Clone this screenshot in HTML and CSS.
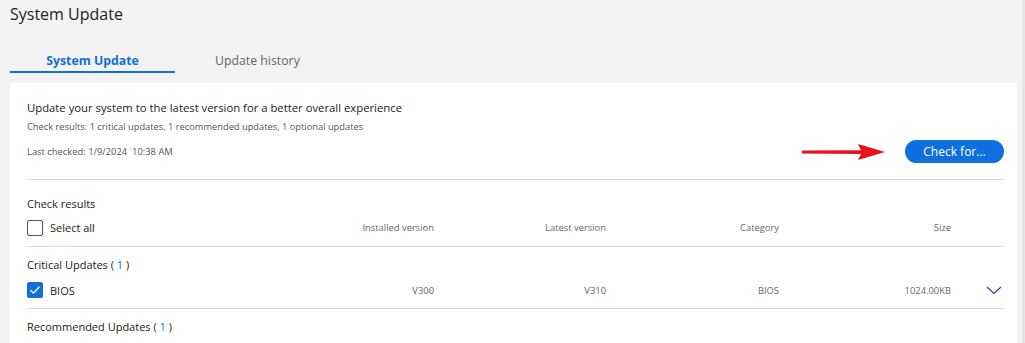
FILE: index.html
```html
<!DOCTYPE html>
<html lang="en">

<head>
    <meta charset="UTF-8">
    <meta name="viewport" content="width=device-width, initial-scale=1.0">
    <link rel="stylesheet" href="styles.css">
    <title>System Update</title>
</head>

<body>
    <div class="page">
        <h1 class="page-title">System Update</h1>

        <div class="tabs">
            <div class="tab active">System Update</div>
            <div class="tab">Update history</div>
        </div>

        <div class="card">
            <div class="summary">
                <div class="summary-text">
                    <div class="summary-title">Update your system to the latest version for a better overall experience</div>
                    <div class="summary-sub">Check results: 1 critical updates, 1 recommended updates, 1 optional updates</div>
                    <div class="summary-date">Last checked: 1/9/2024&nbsp; 10:38 AM</div>
                </div>
                <div class="summary-action">
                    <svg class="arrow" width="84" height="18" viewBox="0 0 84 18">
                        <path d="M0 7.6 L59 7.2 L56 1 L83 9 L56 17 L59 11 L0 10.6 Z" fill="#e5121b" />
                    </svg>
                    <button class="check-btn">Check for...</button>
                </div>
            </div>

            <div class="results">
                <div class="results-title">Check results</div>
                <div class="row header-row">
                    <label class="name-cell"><span class="box"></span>Select all</label>
                    <span class="col col-installed">Installed version</span>
                    <span class="col col-latest">Latest version</span>
                    <span class="col col-category">Category</span>
                    <span class="col col-size">Size</span>
                    <span class="col col-toggle"></span>
                </div>

                <div class="group-title">Critical Updates ( <span class="count">1</span> )</div>
                <div class="row item-row">
                    <label class="name-cell"><span class="box checked">
                        <svg width="12" height="10" viewBox="0 0 12 10"><path d="M1.5 5.2 L4.5 8 L10.5 1.8" fill="none" stroke="#fff" stroke-width="1.3" /></svg>
                    </span>BIOS</label>
                    <span class="col col-installed">V300</span>
                    <span class="col col-latest">V310</span>
                    <span class="col col-category">BIOS</span>
                    <span class="col col-size">1024.00KB</span>
                    <span class="col col-toggle">
                        <svg width="16" height="10" viewBox="0 0 16 10"><path d="M1 2 L8 8.5 L15 2" fill="none" stroke="#1f3f8f" stroke-width="1.1" /></svg>
                    </span>
                </div>

                <div class="group-title">Recommended Updates ( <span class="count">1</span> )</div>
            </div>
        </div>
    </div>
</body>

</html>
```

FILE: styles.css
```css
body {
    margin: 0;
    background-color: #f3f3f3;
    font-family: 'Open Sans', 'Noto Sans', sans-serif;
    color: #1b1b1b;
    overflow: hidden;
}

.page {
    padding: 0 5px 0 10px;
    height: 343px;
    border-right: 3px solid #e6e6e6;
    box-sizing: border-box;
    width: 1025px;
}

.page-title {
    margin: 0;
    padding-top: 3px;
    font-size: 16px;
    font-weight: 400;
    color: #222;
    height: 41px;
}

.tabs {
    display: flex;
    height: 39px;
}

.tab {
    font-size: 12.3px;
    color: #666;
    padding-top: 8px;
    height: 19px;
}

.tab.active {
    width: 165px;
    text-align: center;
    color: #0f6fde;
    font-weight: 700;
    border-bottom: 2px solid #0f6fde;
    margin-right: 40px;
}

.card {
    background-color: #fff;
    padding: 0 13px 0 17px;
    height: 263px;
}

.summary {
    display: flex;
    justify-content: space-between;
    align-items: flex-end;
    border-bottom: 1px solid #dcdcdc;
    padding: 17px 0 21px;
}

.summary-title {
    font-size: 11.3px;
    color: #1b1b1b;
    height: 20px;
}

.summary-sub {
    font-size: 9.3px;
    color: #555;
    height: 25px;
}

.summary-date {
    font-size: 9.4px;
    color: #555;
}

.summary-action {
    display: flex;
    align-items: center;
    gap: 19px;
    margin-bottom: -5px;
}

.arrow {
    display: block;
}

.check-btn {
    font-family: inherit;
    background-color: #0f6fde;
    color: #fff;
    border: none;
    border-radius: 12px;
    font-size: 12px;
    width: 99px;
    height: 23px;
    padding: 0;
    cursor: pointer;
}

.results {
    padding-top: 16px;
}

.results-title {
    font-size: 11px;
    height: 13px;
}

.row {
    display: flex;
    align-items: center;
    border-bottom: 1px solid #dcdcdc;
    box-sizing: border-box;
}

.header-row {
    height: 38px;
}

.item-row {
    height: 37px;
}

.name-cell {
    display: flex;
    align-items: center;
    gap: 7px;
    font-size: 11px;
    width: 273px;
}

.box {
    width: 14px;
    height: 14px;
    border: 1px solid #555;
    border-radius: 2px;
    display: flex;
    align-items: center;
    justify-content: center;
}

.box.checked {
    background-color: #0f6fde;
    border-color: #0f6fde;
}

.col {
    font-size: 9.4px;
    color: #666;
    text-align: right;
}

.col-installed {
    width: 134px;
}

.col-latest {
    width: 172px;
}

.col-category {
    width: 173px;
}

.col-size {
    width: 172px;
}

.col-toggle {
    flex: 1;
    display: flex;
    justify-content: flex-end;
    padding-right: 2px;
}

.group-title {
    font-size: 11px;
    padding-top: 10px;
    height: 15px;
}

.count {
    color: #0f6fde;
}
```
